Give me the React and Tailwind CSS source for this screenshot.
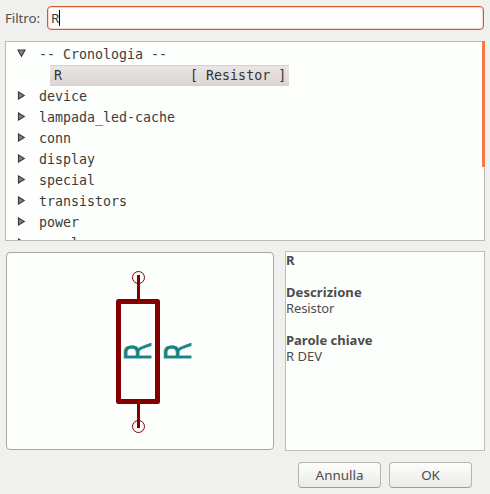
import React from "react";

const libraries = [
  "device",
  "lampada_led-cache",
  "conn",
  "display",
  "special",
  "transistors",
  "power",
  "regul",
];

function Arrow({ open }) {
  return (
    <svg width="9" height="9" viewBox="0 0 9 9" className="mr-[13px] mb-[2px] shrink-0">
      <path
        d={open ? "M1 1H8L4.5 7.2Z" : "M1.5 1V8L7.2 4.5Z"}
        fill="#858583"
        stroke="#3c3c3c"
        strokeWidth="1.2"
      />
    </svg>
  );
}

function Row({ open, children }) {
  return (
    <div className="flex h-[21px] shrink-0 items-center pl-[11px] whitespace-pre">
      <Arrow open={open} />
      <span>{children}</span>
    </div>
  );
}

function Label({ y, x }) {
  return (
    <text
      transform={`translate(${x} ${y}) rotate(-90) scale(0.72 1)`}
      fontFamily="DejaVu Sans, sans-serif"
      fontSize="37.6"
      fill="#168484"
      stroke="#168484"
      strokeWidth="0.5"
    >
      R
    </text>
  );
}

function Symbol() {
  return (
    <svg width="266" height="196" viewBox="7 253 266 196">
      <g fill="none" stroke="#840000">
        <rect x="118.5" y="301.5" width="39" height="100" strokeWidth="5" strokeLinejoin="round" />
        <path d="M138.5 275V300M138.5 403V428" strokeWidth="3" />
        <circle cx="138.5" cy="277.5" r="6" strokeWidth="1" />
        <circle cx="138.5" cy="426.5" r="6" strokeWidth="1" />
      </g>
      <Label x={150.8} y={360.9} />
      <Label x={190.8} y={360.9} />
    </svg>
  );
}

function Button({ children }) {
  return (
    <button className="h-[26px] w-[83px] rounded-[4px] border border-[#b9b2ae] border-b-[#a39d99] bg-linear-to-b from-[#fdfdfc] to-[#ebebe9] text-center text-[13.4px] leading-[24px]">
      {children}
    </button>
  );
}

export default function App() {
  return (
    <div className="flex h-[494px] w-[490px] flex-col overflow-hidden bg-[#f0f1ef] pt-[6px] pl-[5px] font-['Noto_Sans',sans-serif] text-[13px] text-[#4c4c4c]">
      <div className="flex h-[24px] items-center">
        <label className="w-[42px] shrink-0 pt-px text-[13.3px] tracking-[-0.05px]">Filtro:</label>
        <div className="flex h-[24px] w-[437px] items-center rounded-[4px] border border-[#d4582e] bg-[#fdfffc] pl-[3px] text-[#3c3c3c] shadow-[inset_0_0_0_1px_#f8d9cc]">
          <span className="w-[8px] pt-px text-[13.4px]">R</span>
          <span className="h-[16px] w-px bg-black" />
        </div>
      </div>

      <div className="mt-[11px] flex h-[200px] w-[480px] border border-r-0 border-[#bfb8b8] bg-[#fdfffc]">
        <div className="flex h-[198px] flex-1 flex-col overflow-hidden pt-[2px] font-['DejaVu_Sans_Mono',monospace] text-[13.3px] text-[#3c3c3c]">
          <Row open>-- Cronologia --</Row>
          <div className="ml-[44px] flex h-[21px] w-[239px] shrink-0 items-center border-y border-[#d5cfcf] bg-linear-to-b from-[#e9e6e5] to-[#dcd6d5] pl-[4px] whitespace-pre text-[#333]">
            {"R                [ Resistor ]"}
          </div>
          {libraries.map((name) => (
            <Row key={name}>{name}</Row>
          ))}
        </div>
        <div className="-mt-px flex h-[200px] w-[3px] flex-col items-end">
          <div className="h-[126px] w-[3px] bg-[#f47945]" />
          <div className="w-px flex-1 bg-[#bfb8b8]" />
        </div>
      </div>

      <div className="mt-[10px] flex h-[200px]">
        <div className="mt-px ml-px h-[198px] w-[268px] rounded-[4px] border border-[#a9a3a1] bg-[#fdfffc]">
          <Symbol />
        </div>
        <div className="ml-[11px] w-[200px] border border-[#c3baba] bg-[#fdfffc] leading-[16px]">
          <p className="font-bold">R</p>
          <p className="mt-[16px] font-bold tracking-[0.08px]">Descrizione</p>
          <p className="tracking-[-0.1px]">Resistor</p>
          <p className="mt-[16px] font-bold">Parole chiave</p>
          <p>R DEV</p>
        </div>
      </div>

      <div className="mt-[11px] flex gap-[8px] pl-[293px]">
        <Button>Annulla</Button>
        <Button>OK</Button>
      </div>
    </div>
  );
}
